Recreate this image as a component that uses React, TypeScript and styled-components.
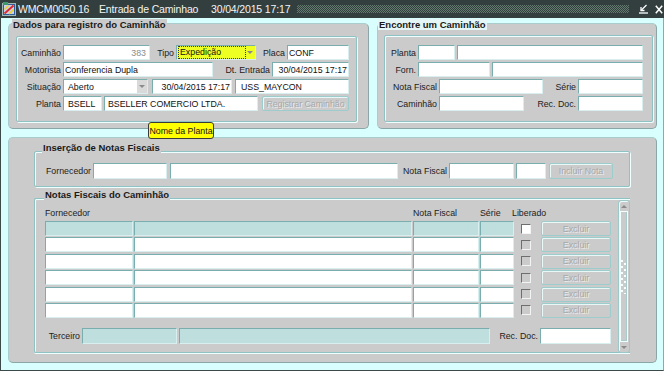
import React from "react";
import styled, { createGlobalStyle } from "styled-components";

const Global = createGlobalStyle`
  html, body { margin: 0; padding: 0; background: #d9fefe; }
  body { font-family: "Liberation Sans", Arial, sans-serif; }
  * { box-sizing: border-box; }
`;

const GRAY = "#cbcbcb";
const TEAL = "#bfdfdf";

const Win = styled.div`
  position: relative;
  width: 664px;
  height: 371px;
  background: #d9fefe;
  display: flex;
  flex-direction: column;
  overflow: hidden;
  font-family: "Liberation Sans", Arial, sans-serif;
  font-size: 8.8px;
  color: #1c1c1c;
`;

const TitleBar = styled.div`
  flex: 0 0 18px;
  height: 18px;
  background: #323f3e;
  display: flex;
  align-items: center;
  padding-left: 2px;
  color: #f4f4f4;
  font-size: 10.5px;
  letter-spacing: -0.15px;
`;

const TitleText = styled.span<{ $w: number }>`
  flex: 0 0 ${(p) => p.$w}px;
  white-space: nowrap;
  line-height: 18px;
`;

const Dots = styled.div`
  flex: 0 0 332px;
  height: 8px;
  background: repeating-conic-gradient(#62796e 0 25%, transparent 0 50%) 0 0 / 2px 2px;
`;

const WinBtns = styled.div`
  display: flex;
  align-items: center;
  gap: 7px;
  margin-left: 10px;
`;

const Body = styled.div`
  flex: 1;
  display: flex;
  flex-direction: column;
  border-left: 1px solid #3d4a4a;
  border-right: 1px solid #8fa8a8;
  border-bottom: 1px solid #3d4a4a;
  padding: 5px 6px 0 7px;
`;

const TopRow = styled.div`
  display: flex;
  gap: 8px;
  height: 106px;
`;

const Panel = styled.div<{ $w: number; $pad: string; $h?: number }>`
  position: relative;
  width: ${(p) => p.$w}px;
  ${(p) => (p.$h ? `height: ${p.$h}px;` : "")}
  background: ${GRAY};
  border: 1px solid;
  border-color: #a9cccc #8aa6a6 #8aa6a6 #a9cccc;
  border-radius: 5px;
  padding: ${(p) => p.$pad};
  display: flex;
  flex-direction: column;
`;

const BottomPanel = styled(Panel)`
  margin-top: 8px;
  gap: 11px;
`;

const Legend = styled.div<{ $left: number; $top: number; $bg?: string }>`
  position: absolute;
  left: ${(p) => p.$left}px;
  top: ${(p) => p.$top}px;
  font-weight: bold;
  font-size: 9.5px;
  line-height: 11px;
  padding: 0 1px;
  background: ${(p) => p.$bg ?? GRAY};
  color: #1a1a1a;
  white-space: nowrap;
`;

const Group = styled.div<{ $pt: number; $h?: number }>`
  position: relative;
  ${(p) => (p.$h ? `flex: 0 0 ${p.$h}px;` : "flex: 1;")}
  border: 1px solid #8fc2c2;
  box-shadow: inset 1px 1px 0 #effefe, 1px 1px 0 #effefe;
  border-radius: 2px;
  padding-top: ${(p) => p.$pt}px;
  display: flex;
  flex-direction: column;
  gap: 2px;
`;

const ListGroup = styled.div`
  position: relative;
  flex: 1;
  display: flex;
  border: 1px solid #8fc2c2;
  border-right: none;
  box-shadow: inset 1px 1px 0 #effefe, 0 1px 0 #effefe;
  border-radius: 2px 0 0 2px;
`;

const Row = styled.div<{ $h?: number; $mt?: number }>`
  display: flex;
  height: ${(p) => p.$h ?? 15}px;
  margin-top: ${(p) => p.$mt ?? 0}px;
`;

const Label = styled.div<{ $w: number }>`
  flex: 0 0 ${(p) => p.$w}px;
  display: flex;
  align-items: center;
  justify-content: flex-end;
  padding-right: 2px;
  white-space: nowrap;
  color: #1c1c1c;
`;

const Field = styled.div<{
  $w?: number;
  $ml?: number;
  $align?: "left" | "right";
  $pad?: number;
  $bg?: string;
  $muted?: boolean;
}>`
  ${(p) => (p.$w ? `flex: 0 0 ${p.$w}px;` : "")}
  margin-left: ${(p) => p.$ml ?? 0}px;
  height: 100%;
  background: ${(p) => p.$bg ?? "#ffffff"};
  border: 1px solid;
  border-color: #7aaeae #d9eeee #d9eeee #7aaeae;
  padding: 0 ${(p) => p.$pad ?? 2}px;
  display: flex;
  align-items: center;
  justify-content: ${(p) => (p.$align === "right" ? "flex-end" : "flex-start")};
  white-space: nowrap;
  overflow: hidden;
  color: ${(p) => (p.$muted ? "#8c8c8c" : "#111111")};
`;

const Select = styled(Field)`
  padding: 0;
`;

const SelectText = styled.div<{ $pad: number }>`
  flex: 1;
  padding-left: ${(p) => p.$pad}px;
  display: flex;
  align-items: center;
  height: 100%;
`;

const Focus = styled.span<{ $w: number }>`
  display: inline-block;
  width: ${(p) => p.$w}px;
  line-height: 11px;
  outline: 1px dotted #333;
  padding-left: 1px;
`;

const ArrowBox = styled.div<{ $bg: string }>`
  flex: 0 0 10px;
  height: 100%;
  background: ${(p) => p.$bg};
  display: flex;
  align-items: center;
  justify-content: center;
  &::after {
    content: "";
    border-left: 3px solid transparent;
    border-right: 3px solid transparent;
    border-top: 3px solid #8a8a8a;
  }
`;

const Btn = styled.div<{ $w: number; $ml?: number }>`
  flex: 0 0 ${(p) => p.$w}px;
  margin-left: ${(p) => p.$ml ?? 0}px;
  height: 100%;
  background: ${GRAY};
  border: 1px solid #9ccccc;
  border-radius: 2px;
  box-shadow: inset 1px 1px 0 #e9f7f7;
  display: flex;
  align-items: center;
  justify-content: center;
  color: #a8a8a8;
  text-shadow: 1px 1px 0 #ececec;
  white-space: nowrap;
`;

const TableArea = styled.div`
  flex: 1;
  padding-left: 10px;
  display: flex;
  flex-direction: column;
`;

const HeadGrid = styled.div`
  display: grid;
  grid-template-columns: 88px 278px 66px 34px 25px 70px;
  column-gap: 1px;
  height: 12px;
  margin-top: 8px;
  margin-bottom: 2px;
  align-items: center;
`;

const Head = styled.div<{ $col: string; $ml?: number }>`
  grid-column: ${(p) => p.$col};
  margin-left: ${(p) => p.$ml ?? 0}px;
  white-space: nowrap;
`;

const Grid = styled.div`
  display: grid;
  grid-template-columns: 88px 278px 66px 34px 25px 70px;
  grid-auto-rows: 15px;
  column-gap: 1px;
  row-gap: 1.4px;
`;

const CheckCell = styled.div`
  display: flex;
  align-items: center;
  padding-left: 6px;
`;

const Check = styled.div<{ $white?: boolean }>`
  width: 10px;
  height: 10px;
  background: ${(p) => (p.$white ? "#ffffff" : GRAY)};
  border: 1px solid;
  border-color: #6e6e6e #f4f4f4 #f4f4f4 #6e6e6e;
`;

const Scroll = styled.div`
  flex: 0 0 10px;
  margin-top: 1px;
  margin-bottom: -1px;
  border: 1px solid #9cc8c8;
  border-radius: 3px;
  background: ${GRAY};
  display: flex;
  flex-direction: column;
  box-shadow: inset 1px 1px 0 #eefcfc;
`;

const ScrollArrow = styled.div<{ $up?: boolean }>`
  flex: 0 0 10px;
  display: flex;
  align-items: center;
  justify-content: center;
  &::after {
    content: "";
    border-left: 3px solid transparent;
    border-right: 3px solid transparent;
    ${(p) =>
      p.$up ? "border-bottom: 3px solid #8a8a8a;" : "border-top: 3px solid #8a8a8a;"}
  }
`;

const Thumb = styled.div`
  flex: 1;
  margin: 0 1px;
  border: 1px solid #f2ffff;
  box-shadow: inset -1px -1px 0 #a8cccc;
  display: flex;
  align-items: center;
  justify-content: center;
`;

const Grip = styled.div`
  width: 6px;
  height: 34px;
  background-image: radial-gradient(circle at 1px 1px, #f8ffff 0.8px, transparent 1.1px),
    radial-gradient(circle at 1px 1px, #f8ffff 0.8px, transparent 1.1px);
  background-size: 6px 6px, 6px 6px;
  background-position: 0 0, 3px 3px;
`;

const Tooltip = styled.div`
  position: absolute;
  left: 148px;
  top: 122px;
  width: 66px;
  height: 17px;
  background: #ffff00;
  border: 1px solid #3a3a3a;
  border-radius: 3px;
  display: flex;
  align-items: center;
  justify-content: center;
  color: #111;
  white-space: nowrap;
`;

const AppIcon = () => (
  <svg width="14" height="14" viewBox="0 0 14 14" style={{ marginRight: 2 }}>
    <rect x="0.5" y="1.5" width="13" height="12" fill="#2f5f9a" stroke="#9fb8b8" />
    <rect x="2" y="3" width="10" height="9" fill="#c8d0f0" />
    <path d="M2.5 11.5 L11.5 3.5" stroke="#e02828" strokeWidth="2" />
    <path d="M2.5 7.5 L6.5 3.5" stroke="#f2d020" strokeWidth="1.6" />
    <path d="M7 12 L11.5 7.5" stroke="#f2d020" strokeWidth="1.6" />
    <rect x="1" y="0" width="5" height="3" fill="#3f9a6a" />
  </svg>
);

const MinIcon = () => (
  <svg width="9" height="10" viewBox="0 0 9 10">
    <path d="M7.5 1 L2 6.5" stroke="#fff" strokeWidth="1.3" fill="none" />
    <path d="M2 3 V6.5 H5.5" stroke="#fff" strokeWidth="1.3" fill="none" />
    <path d="M0 9 H9" stroke="#fff" strokeWidth="1.3" />
  </svg>
);

const CloseIcon = () => (
  <svg width="8" height="9" viewBox="0 0 8 9">
    <path d="M0.8 0.8 L7.2 8.2 M7.2 0.8 L0.8 8.2" stroke="#fff" strokeWidth="1.5" />
  </svg>
);

const rows = [0, 1, 2, 3, 4, 5];

export default function App() {
  return (
    <>
      <Global />
      <Win>
        <TitleBar>
          <AppIcon />
          <TitleText $w={81}>WMCM0050.16</TitleText>
          <TitleText $w={112}>Entrada de Caminhao</TitleText>
          <TitleText $w={86}>30/04/2015 17:17</TitleText>
          <Dots />
          <WinBtns>
            <MinIcon />
            <CloseIcon />
          </WinBtns>
        </TitleBar>
        <Body>
          <TopRow>
            <Panel $w={361} $pad="12px 11px 6px 7px">
              <Legend $left={3} $top={-5}>
                Dados para registro do Caminhão
              </Legend>
              <Group $pt={8}>
                <Row>
                  <Label $w={46}>Caminhão</Label>
                  <Field $w={87} $align="right" $pad={3} $muted>
                    383
                  </Field>
                  <Label $w={26}>Tipo</Label>
                  <Select $w={80} $bg="#eeff22">
                    <SelectText $pad={2}>
                      <Focus $w={66}>Expedição</Focus>
                    </SelectText>
                    <ArrowBox $bg="transparent" />
                  </Select>
                  <Label $w={31}>Placa</Label>
                  <Field $w={62} $pad={1}>
                    CONF
                  </Field>
                </Row>
                <Row>
                  <Label $w={46}>Motorista</Label>
                  <Field $w={150} $pad={1}>
                    Conferencia Dupla
                  </Field>
                  <Label $w={59}>Dt. Entrada</Label>
                  <Field $w={77} $align="right" $pad={1}>
                    30/04/2015 17:17
                  </Field>
                </Row>
                <Row>
                  <Label $w={46}>Situação</Label>
                  <Select $w={85}>
                    <SelectText $pad={4}>Aberto</SelectText>
                    <ArrowBox $bg="#d9d9d9" />
                  </Select>
                  <Field $w={80} $ml={4} $align="right" $pad={1}>
                    30/04/2015 17:17
                  </Field>
                  <Field $w={114} $ml={3} $pad={5}>
                    USS_MAYCON
                  </Field>
                </Row>
                <Row>
                  <Label $w={46}>Planta</Label>
                  <Field $w={39} $pad={4}>
                    BSELL
                  </Field>
                  <Field $w={154} $ml={2} $pad={3}>
                    BSELLER COMERCIO LTDA.
                  </Field>
                  <Btn $w={87} $ml={4}>
                    Registrar Caminhão
                  </Btn>
                </Row>
              </Group>
            </Panel>
            <Panel $w={280} $pad="11px 3px 6px 6px">
              <Legend $left={0} $top={-5} $bg="#e4f6f6">
                Encontre um Caminhão
              </Legend>
              <Group $pt={9}>
                <Row>
                  <Label $w={33}>Planta</Label>
                  <Field $w={37} />
                  <Field $w={186} $ml={2} />
                </Row>
                <Row>
                  <Label $w={33}>Forn.</Label>
                  <Field $w={72} />
                  <Field $w={151} $ml={2} />
                </Row>
                <Row>
                  <Label $w={54}>Nota Fiscal</Label>
                  <Field $w={104} />
                  <Label $w={35}>Série</Label>
                  <Field $w={65} />
                </Row>
                <Row>
                  <Label $w={54}>Caminhão</Label>
                  <Field $w={85} />
                  <Label $w={54}>Rec. Doc.</Label>
                  <Field $w={65} />
                </Row>
              </Group>
            </Panel>
          </TopRow>
          <BottomPanel $w={649} $h={226} $pad="13px 26px 9px 25px">
            <Group $pt={11} $h={36}>
              <Legend $left={7} $top={-10}>
                Inserção de Notas Fiscais
              </Legend>
              <Row $h={16}>
                <Label $w={58}>Fornecedor</Label>
                <Field $w={74} />
                <Field $w={228} $ml={3} />
                <Label $w={51}>Nota Fiscal</Label>
                <Field $w={65} />
                <Field $w={30} $ml={2} />
                <Btn $w={64} $ml={3}>
                  Incluir Nota
                </Btn>
              </Row>
            </Group>
            <ListGroup>
              <Legend $left={9} $top={-10}>
                Notas Fiscais do Caminhão
              </Legend>
              <TableArea>
                <HeadGrid>
                  <Head $col="1 / span 2">Fornecedor</Head>
                  <Head $col="3">Nota Fiscal</Head>
                  <Head $col="4">Série</Head>
                  <Head $col="5 / span 2" $ml={-3}>
                    Liberado
                  </Head>
                </HeadGrid>
                <Grid>
                  {rows.map((r) => (
                    <React.Fragment key={r}>
                      <Field $bg={r === 0 ? TEAL : "#fff"} />
                      <Field $bg={r === 0 ? TEAL : "#fff"} />
                      <Field $bg={r === 0 ? TEAL : "#fff"} />
                      <Field $bg={r === 0 ? TEAL : "#fff"} />
                      <CheckCell>
                        <Check $white={r === 0} />
                      </CheckCell>
                      <Btn $w={70}>Excluir</Btn>
                    </React.Fragment>
                  ))}
                </Grid>
                <Row $h={16} $mt={10}>
                  <Label $w={37}>Terceiro</Label>
                  <Field $w={95} $bg={TEAL} />
                  <Field $w={311} $ml={2} $bg={TEAL} />
                  <Label $w={50}>Rec. Doc.</Label>
                  <Field $w={71} />
                </Row>
              </TableArea>
              <Scroll>
                <ScrollArrow $up />
                <Thumb>
                  <Grip />
                </Thumb>
                <ScrollArrow />
              </Scroll>
            </ListGroup>
          </BottomPanel>
        </Body>
        <Tooltip>Nome da Planta</Tooltip>
      </Win>
    </>
  );
}
